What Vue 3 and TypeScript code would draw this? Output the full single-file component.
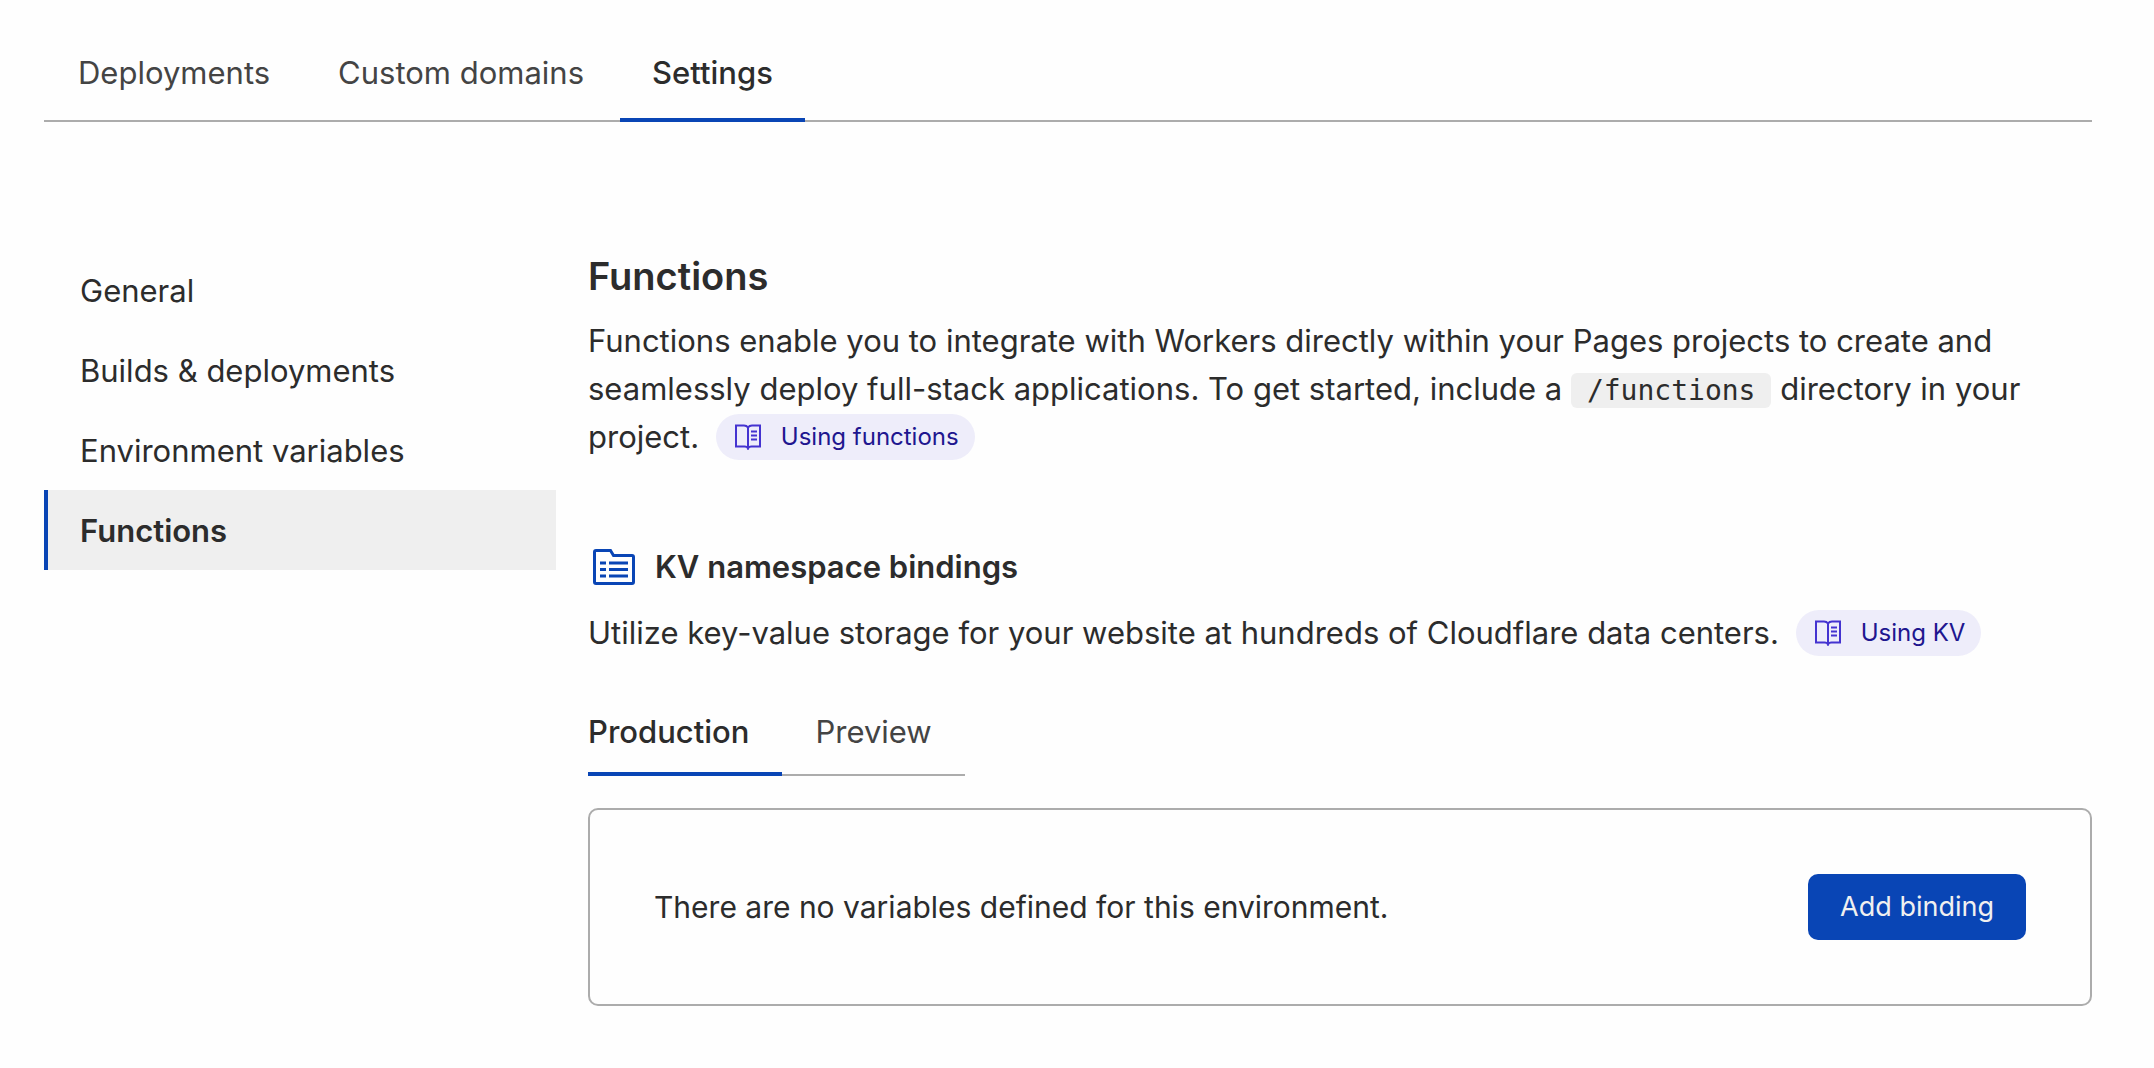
<script setup lang="ts">
import { ref } from 'vue'

const pageTabs = ['Deployments', 'Custom domains', 'Settings']
const sections = ['General', 'Builds & deployments', 'Environment variables', 'Functions']
const environments = ['Production', 'Preview']

const activeTab = ref('Settings')
const activeSection = ref('Functions')
const activeEnvironment = ref('Production')
</script>

<template>
  <div class="page">
    <nav class="page-tabs" aria-label="Project">
      <a
        v-for="tab in pageTabs"
        :key="tab"
        href="#"
        class="page-tab"
        :class="{ active: tab === activeTab }"
        @click.prevent="activeTab = tab"
      >{{ tab }}</a>
    </nav>

    <div class="body">
      <nav class="sidebar" aria-label="Settings">
        <a
          v-for="section in sections"
          :key="section"
          href="#"
          class="side-link"
          :class="{ active: section === activeSection }"
          @click.prevent="activeSection = section"
        >{{ section }}</a>
      </nav>

      <main class="content">
        <h1>Functions</h1>
        <p class="text">
          Functions enable you to integrate with Workers directly within your Pages projects to create and
          seamlessly deploy full-stack applications. To get started, include a <code>/functions</code>
          directory in your project.
          <a href="#" class="doc-link">
            <svg class="book" viewBox="0 0 26 26" aria-hidden="true">
              <path d="M13 3.5C12 2 10.500 1.500 9 1.500H1V22.500H9.500C11 22.500 12.500 23 13 24.500C13.500 23 15 22.500 16.500 22.500H25V1.500H17C15.500 1.500 14 2 13 3.500ZM13 3.500V24.500" />
              <path d="M16 7.500H22M16 11.500H22M16 15.500H22" />
            </svg>
            <span>Using functions</span>
          </a>
        </p>

        <h2>
          <svg class="folder" viewBox="0 0 42 36" aria-hidden="true">
            <path d="M1.500 3V33Q1.500 34.500 3 34.500H39Q40.500 34.500 40.500 33V8Q40.500 6.500 39 6.500H20.500L17.500 1.500H3Q1.500 1.500 1.500 3Z" />
            <path d="M7 14H13M16 14H35M7 20.500H13M16 20.500H35M7 27H13M16 27H35" />
          </svg>
          <span>KV namespace bindings</span>
        </h2>
        <p class="text">
          Utilize key-value storage for your website at hundreds of Cloudflare data centers.
          <a href="#" class="doc-link">
            <svg class="book" viewBox="0 0 26 26" aria-hidden="true">
              <path d="M13 3.5C12 2 10.500 1.500 9 1.500H1V22.500H9.500C11 22.500 12.500 23 13 24.500C13.500 23 15 22.500 16.500 22.500H25V1.500H17C15.500 1.500 14 2 13 3.500ZM13 3.500V24.500" />
              <path d="M16 7.500H22M16 11.500H22M16 15.500H22" />
            </svg>
            <span>Using KV</span>
          </a>
        </p>

        <div class="env-tabs" role="tablist">
          <button
            v-for="env in environments"
            :key="env"
            type="button"
            role="tab"
            class="env-tab"
            :class="{ active: env === activeEnvironment }"
            :aria-selected="env === activeEnvironment"
            @click="activeEnvironment = env"
          >{{ env }}</button>
        </div>

        <section class="panel">
          <p>There are no variables defined for this environment.</p>
          <button type="button" class="primary">Add binding</button>
        </section>
      </main>
    </div>
  </div>
</template>

<style>
body {
  margin: 0;
  background: #fefefe;
}
</style>

<style scoped>
.page {
  padding: 32px 62px 62px 44px;
  color: #2c2c2c;
  font: 400 31px/48px Inter, "Liberation Sans", sans-serif;
}

a {
  color: inherit;
  text-decoration: none;
}

h1,
h2,
p {
  margin: 0;
}

.page-tabs {
  display: flex;
  gap: 4px;
  padding-left: 2px;
  border-bottom: 2px solid #acacac;
}

.page-tab {
  padding: 17px 32px 21px;
  margin-bottom: -2px;
  border-bottom: 4px solid transparent;
  color: #444;
}

.page-tab.active {
  border-color: #0945b5;
  color: #2c2c2c;
  font-weight: 500;
}

.body {
  display: grid;
  grid-template-columns: 25% minmax(0, 1fr);
  gap: 32px;
  padding-top: 128px;
}

.sidebar {
  display: flex;
  flex-direction: column;
}

.side-link {
  padding: 17px 32px 15px;
  border-left: 4px solid transparent;
}

.side-link.active {
  border-color: #0945b5;
  background: #efefef;
  font-weight: 600;
}

.content {
  padding-top: 2px;
}

h1 {
  margin-bottom: 17px;
  font-size: 38px;
  font-weight: 600;
  line-height: 48px;
}

code {
  padding: 1px 16px;
  border-radius: 6px;
  background: #efefef;
  font: 28px/28px "DejaVu Sans Mono", monospace;
}

.doc-link {
  display: inline-flex;
  align-items: center;
  gap: 20px;
  margin-left: 8px;
  padding: 0 16px 0 19px;
  border-radius: 23px;
  background: #eeedfa;
  color: #20168f;
  font-size: 24px;
  line-height: 46px;
  vertical-align: -2px;
}

.book {
  width: 26px;
  height: 26px;
  fill: none;
  stroke: #4433d0;
  stroke-width: 2;
}

h2 {
  display: flex;
  align-items: center;
  gap: 20px;
  margin: 82px 0 18px;
  padding-left: 5px;
  font-size: 31px;
  font-weight: 600;
  line-height: 48px;
}

.folder {
  width: 42px;
  height: 36px;
  fill: none;
  stroke: #0945b5;
  stroke-width: 3;
}

.env-tabs {
  display: flex;
  width: fit-content;
  margin: 51px 0 32px;
  border-bottom: 2px solid #acacac;
}

.env-tab {
  margin: 0 0 -2px;
  padding: 0 33px 16px;
  border: 0;
  border-bottom: 4px solid transparent;
  background: none;
  color: #444;
  font: inherit;
}

.env-tab:first-child {
  padding-left: 0;
}

.env-tab.active {
  border-color: #0945b5;
  color: #2c2c2c;
  font-weight: 500;
}

.panel {
  display: flex;
  align-items: center;
  justify-content: space-between;
  padding: 64px;
  border: 2px solid #acacac;
  border-radius: 10px;
}

.panel p {
  font-size: 30px;
}

.primary {
  padding: 9px 32px;
  border: 0;
  border-radius: 10px;
  background: #0945b5;
  color: #f0f0f0;
  font: 27px/48px Inter, "Liberation Sans", sans-serif;
}
</style>
